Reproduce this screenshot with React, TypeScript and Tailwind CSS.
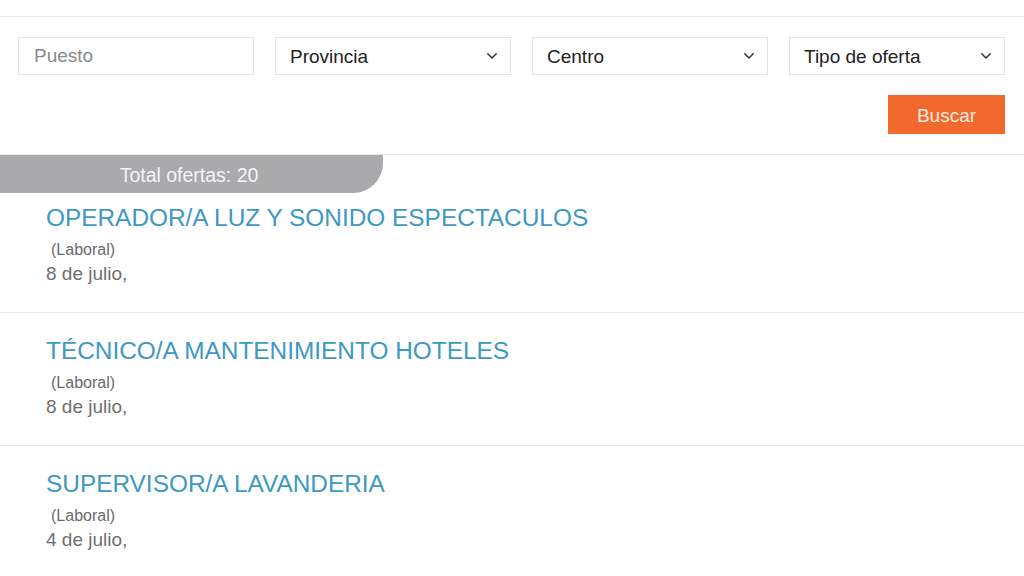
import React from "react";

const Chevron = () => (
  <svg width="12" height="8" viewBox="0 0 12 8" fill="none" className="shrink-0">
    <path d="M1.8 1.8 L6 6 L10.2 1.8" stroke="#333" strokeWidth="1.5" strokeLinecap="round" strokeLinejoin="round" />
  </svg>
);

const Select = ({ label, w }: { label: string; w: string }) => (
  <div className={`${w} h-[38px] border border-[#e4e4e4] bg-white flex items-center justify-between pl-[14px] pr-[12px]`}>
    <span className="text-[19px] text-[#222] pt-[2px]">{label}</span>
    <Chevron />
  </div>
);

const items = [
  { title: "OPERADOR/A LUZ Y SONIDO ESPECTACULOS", date: "8 de julio," },
  { title: "TÉCNICO/A MANTENIMIENTO HOTELES", date: "8 de julio," },
  { title: "SUPERVISOR/A LAVANDERIA", date: "4 de julio," },
];

export default function App() {
  return (
    <div className="w-[1024px] h-[576px] overflow-hidden bg-white" style={{ fontFamily: '"Liberation Sans", Arial, sans-serif' }}>
      <div className="h-[17px] border-b border-[#ebebeb]" />
      <div className="pt-[20px] pb-[20px] border-b border-[#e6e6e6]">
        <div className="flex gap-[21px] pl-[18px]">
          <div className="w-[236px] h-[38px] border border-[#e4e4e4] flex items-center pl-[15px]">
            <span className="text-[19px] text-[#8a8a8a] pt-[1px]">Puesto</span>
          </div>
          <Select label="Provincia" w="w-[236px]" />
          <Select label="Centro" w="w-[236px]" />
          <Select label="Tipo de oferta" w="w-[216px]" />
        </div>
        <div className="flex justify-end pr-[19px] mt-[20px]">
          <button className="w-[117px] h-[39px] bg-[#f2692e] text-[#fde9df] text-[19px] flex items-center justify-center pt-[3px]">
            Buscar
          </button>
        </div>
      </div>
      <div className="w-[383px] h-[38px] bg-[#aaa9ac] rounded-br-[30px] flex items-center justify-center pt-[3px]">
        <span className="text-[19.5px] text-[#f5f5f5] mr-[5px]">Total ofertas: 20</span>
      </div>
      <div>
        {items.map((it, i) => (
          <div key={i} className={`${i === 0 ? "pt-[11px]" : "pt-[24px]"} pb-[26px] pl-[46px] border-b border-[#e6e6e6]`}>
            <div className="text-[24.4px] leading-[28px] text-[#3d99c3]">{it.title}</div>
            <div className="mt-[8px] pl-[5px] text-[16px] leading-[20px] text-[#6a6a6a]">(Laboral)</div>
            <div className="mt-[2px] text-[19px] leading-[24px] text-[#707070]">{it.date}</div>
          </div>
        ))}
      </div>
    </div>
  );
}
